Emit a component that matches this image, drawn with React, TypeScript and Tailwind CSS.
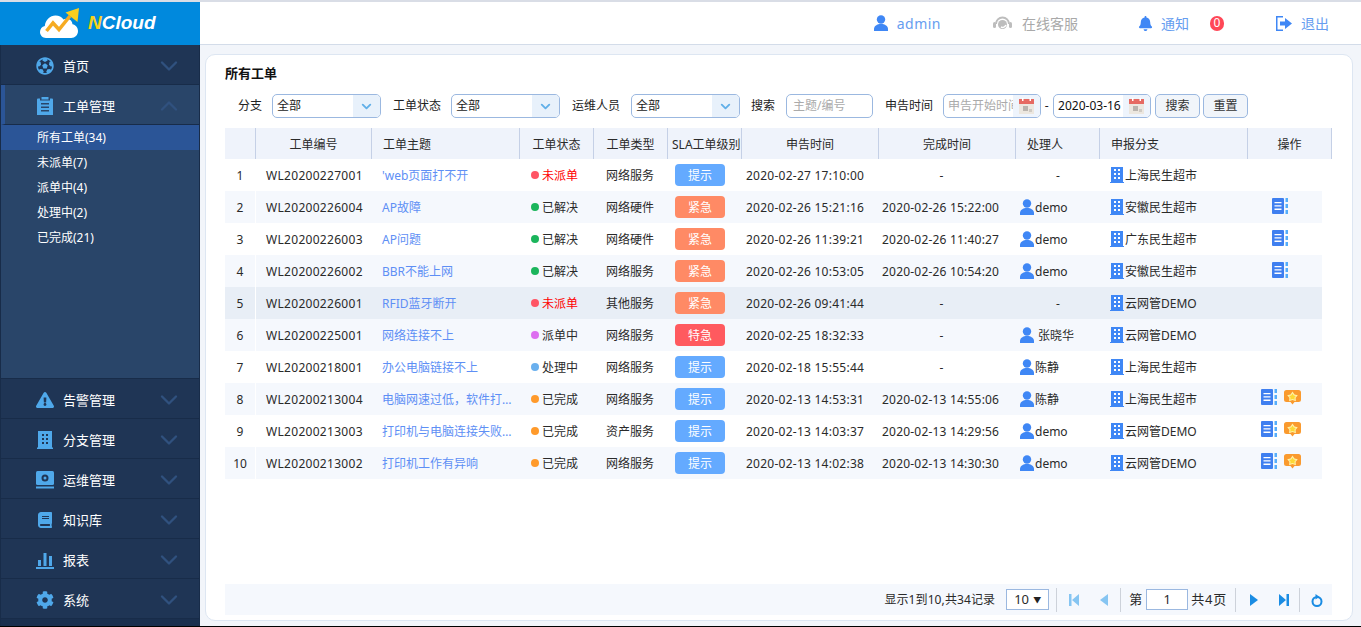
import type { ReactNode } from 'react';
import { ChevronDown, ChevronUp } from 'lucide-react';
import { FaBell, FaBook, FaCog, FaExclamationTriangle, FaFutbol } from 'react-icons/fa';

function Logo() {
  return (
    <svg width="41" height="31" viewBox="0 0 41 31">
      <path d="M6 30c-3.500 0-6-2.800-6-6 0-3 2-5.400 4.800-6C5.500 12 10 7.500 15.500 7.500c3.500 0 6.200 1.500 8 4 1.200-.7 2.500-1 4-.8 2.800.4 4.800 2.700 5 5.500 3 .7 5.500 3.300 5.500 6.800 0 3.800-3 7-6.800 7z" fill="#fff" />
      <path d="M6.500 23l6.500-8 6 6.500L30 8" fill="none" stroke="#f6ab22" strokeWidth="3.500" />
      <path d="M25.500 4.500L39 0l-1.500 14z" fill="#f8cf1f" />
    </svg>
  );
}

function Clipboard() {
  return (
    <svg width="16" height="18" viewBox="0 0 16 18" fill="#4fa8ea">
      <path d="M0 2.500a1 1 0 0 1 1-1h2v2h10v-2h2a1 1 0 0 1 1 1V18H0z" />
      <path d="M4.500 0h7v2.500h-7z" />
      <path d="M4 6h8v1.500H4zM4 9.500h8V11H4zM4 13h8v1.500H4z" fill="#294569" />
    </svg>
  );
}

function BuildingNav() {
  return (
    <svg width="16" height="18" viewBox="0 0 16 18" fill="#4fa8ea">
      <path d="M1 0h14v16.500h1V18H0v-1.500h1z" />
      <path d="M5 3h2v2H5zM9 3h2v2H9zM5 7h2v2H5zM9 7h2v2H9zM5 11h2v2H5zM9 11h2v2H9z" fill="#1f3555" />
    </svg>
  );
}

function OpsNav() {
  return (
    <svg width="18" height="18" viewBox="0 0 18 18" fill="#4fa8ea">
      <rect width="18" height="14" rx="1.500" />
      <rect y="15.500" width="18" height="2" />
      <circle cx="9" cy="7" r="2.500" fill="none" stroke="#1f3555" strokeWidth="2" />
    </svg>
  );
}

function ChartNav() {
  return (
    <svg width="18" height="18" viewBox="0 0 18 18" fill="#4fa8ea">
      <path d="M2 9h3v6H2zM7.500 2h3v13h-3zM13 5h3v10h-3zM0 16h18v2H0z" />
    </svg>
  );
}

const navBelow = [
  { label: '告警管理', icon: <FaExclamationTriangle size={18} color="#4fa8ea" /> },
  { label: '分支管理', icon: <BuildingNav /> },
  { label: '运维管理', icon: <OpsNav /> },
  { label: '知识库', icon: <FaBook size={16} color="#4fa8ea" /> },
  { label: '报表', icon: <ChartNav /> },
  { label: '系统', icon: <FaCog size={18} color="#4fa8ea" /> },
];

const subItems = ['所有工单(34)', '未派单(7)', '派单中(4)', '处理中(2)', '已完成(21)'];

function NavRow({ label, icon }: { label: string; icon: ReactNode }) {
  return (
    <div className="h-10 flex items-center border-b border-[#182c49] bg-[#1f3555] pt-[2px] pl-[35px] pr-[16px] text-white text-[13px]">
      <span className="w-[18px] flex justify-center">{icon}</span>
      <span className="ml-[9px] pt-[2px] flex-1">{label}</span>
      <ChevronDown size={28} color="#30517f" strokeWidth={2} />
    </div>
  );
}

function Sidebar() {
  return (
    <aside className="w-[200px] shrink-0 flex flex-col bg-[#1a2f4e]">
      <div className="h-[43px] bg-[#0089dd] flex items-center pl-10">
        <Logo />
        <span className="ml-[7px] font-['Liberation_Sans',sans-serif] font-bold italic text-[19px] text-white">
          <span className="text-[#f8d21c]">N</span>Cloud
        </span>
      </div>
      <div className="flex-1 flex flex-col border-x border-[#182c49]">
        <NavRow label="首页" icon={<FaFutbol size={18} color="#4fa8ea" />} />
        <div className="h-10 flex items-center border-b border-[#182c49] bg-[#294569] border-l-4 border-l-[#2b5597] pt-[2px] pl-[31px] pr-[16px] text-white text-[13px]">
          <span className="w-[18px] flex justify-center"><Clipboard /></span>
          <span className="ml-[9px] pt-[2px] flex-1">工单管理</span>
          <ChevronUp size={28} color="#30517f" strokeWidth={2} />
        </div>
        <div className="h-[254px] bg-[#294569] border-b border-[#182c49] text-white text-[12px]">
          {subItems.map((s, i) => (
            <div key={s} className={i === 0 ? 'h-[25px] flex items-center pl-9 bg-[#2b5597]' : 'h-[25px] flex items-center pl-9'}>
              {s}
            </div>
          ))}
        </div>
        {navBelow.map(n => <NavRow key={n.label} label={n.label} icon={n.icon} />)}
      </div>
    </aside>
  );
}

function Headset() {
  return (
    <svg width="19" height="16" viewBox="0 0 19 16" fill="none">
      <path d="M3 9a6.500 6.500 0 0 1 13 0" stroke="#bdbdbd" strokeWidth="2" />
      <rect x="0" y="7" width="3" height="6" rx="1.500" fill="#bdbdbd" />
      <rect x="16" y="7" width="3" height="6" rx="1.500" fill="#bdbdbd" />
      <circle cx="9.500" cy="9.500" r="4.500" fill="#bdbdbd" />
      <path d="M8 12c2 1 4 0 5-2" stroke="#fff" strokeWidth="1.500" />
    </svg>
  );
}

function Logout() {
  return (
    <svg width="16" height="15" viewBox="0 0 16 15" fill="#3f87f5">
      <path d="M0 0h7v1.500H1.500v12H7V15H0z" />
      <path d="M4 5.500h5V2l7 5.500L9 13V9.500H4z" />
    </svg>
  );
}

function Header() {
  return (
    <header className="h-[43px] bg-white border-b border-[#d3dce9] flex items-center justify-end pr-8 text-[14px] text-[#669df0]">
      <PersonIcon />
      <span className="ml-[9px] tracking-[0.5px]">admin</span>
      <span className="ml-[52px]"><Headset /></span>
      <span className="ml-[10px] text-[#a9a9a9]">在线客服</span>
      <span className="ml-[60px]"><FaBell size={15} color="#3f87f5" /></span>
      <span className="ml-2">通知</span>
      <span className="ml-[21px] w-[14px] h-[15px] rounded-full bg-[#ff4757] text-white text-[12px] flex items-center justify-center">0</span>
      <span className="ml-[52px]"><Logout /></span>
      <span className="ml-[9px]">退出</span>
    </header>
  );
}

function SelectBox({ className }: { className: string }) {
  return (
    <div className={`w-[109px] h-6 border border-[#9bb8e0] rounded-[5px] flex items-center overflow-hidden bg-white ${className}`}>
      <span className="flex-1 pl-[4px] text-[12px] text-[#222]">全部</span>
      <span className="w-[27px] h-full bg-[#e8f1fb] flex items-center justify-center">
        <ChevronDown size={15} color="#62b0e8" strokeWidth={3} />
      </span>
    </div>
  );
}

function Calendar() {
  return (
    <svg width="15" height="16" viewBox="0 0 15 16">
      <rect y="1" width="15" height="15" fill="#ece7df" />
      <rect y="1" width="15" height="5" fill="#e66a62" />
      <rect x="3" width="1.500" height="3" fill="#fff" />
      <rect x="10.500" width="1.500" height="3" fill="#fff" />
      <rect x="4" y="8" width="5" height="5" fill="#b9b4ae" />
      <rect x="10" y="11" width="3" height="3" fill="#cfcac3" />
    </svg>
  );
}

function DateBox({ value, className }: { value?: string; className: string }) {
  return (
    <div className={`w-[98px] h-6 border border-[#9bb8e0] rounded-[5px] flex items-center overflow-hidden bg-white ${className}`}>
      <span className={value ? 'flex-1 pl-[4px] text-[12px] text-[#111] whitespace-nowrap overflow-hidden' : 'flex-1 pl-[4px] text-[12px] text-[#aaa] whitespace-nowrap overflow-hidden'}>
        {value ?? '申告开始时间'}
      </span>
      <span className="w-[27px] shrink-0 h-full bg-[#eef4fc] flex items-center justify-center">
        <Calendar />
      </span>
    </div>
  );
}

function FilterBar() {
  return (
    <div className="mt-3 ml-[32px] flex items-center h-6 text-[12px] text-[#222]">
      <span>分支</span>
      <SelectBox className="ml-[10px]" />
      <span className="ml-3">工单状态</span>
      <SelectBox className="ml-[10px]" />
      <span className="ml-3">运维人员</span>
      <SelectBox className="ml-[11px]" />
      <span className="ml-[11px]">搜索</span>
      <div className="ml-[11px] w-[87px] h-6 border border-[#9bb8e0] rounded-[5px] flex items-center pl-[6px] text-[#aaa]">主题/编号</div>
      <span className="ml-3">申告时间</span>
      <DateBox className="ml-[10px]" />
      <span className="ml-[2px] mr-[3px] w-[7px] text-center">-</span>
      <DateBox className="" value="2020-03-16" />
      <button className="ml-[4px] w-[45px] h-6 border border-[#9bb8e0] rounded-[5px] bg-[#f1f5fa] text-[#333]">搜索</button>
      <button className="ml-[3px] w-[45px] h-6 border border-[#9bb8e0] rounded-[5px] bg-[#f1f5fa] text-[#333]">重置</button>
    </div>
  );
}

function PersonIcon() {
  return (
    <svg width="14" height="16" viewBox="0 0 14 16" fill="#3f87f5" className="shrink-0">
      <circle cx="7" cy="4.500" r="4.200" />
      <path d="M0 16v-2c0-3 3-5 7-5s7 2 7 5v2z" />
    </svg>
  );
}

function BuildingIcon() {
  return (
    <svg width="14" height="16" viewBox="0 0 14 16" fill="#3f87f5" className="shrink-0">
      <path d="M1 0h12v15h1v1H0v-1h1z" />
      <path d="M4 2h2v2H4zM8 2h2v2H8zM4 6h2v2H4zM8 6h2v2H8zM4 10h2v2H4zM8 10h2v2H8z" fill="#fff" />
    </svg>
  );
}

function DetailIcon() {
  return (
    <svg width="16" height="16" viewBox="0 0 16 16">
      <rect width="12" height="16" rx="1" fill="#3f7ff0" />
      <path d="M2.500 4h7v1.300h-7zM2.500 7.300h7v1.300h-7zM2.500 10.600h7v1.300h-7z" fill="#fff" />
      <path d="M13.500 0H16v4h-2.500zM13.500 6H16v4h-2.500zM13.500 12H16v4h-2.500z" fill="#56aefb" />
    </svg>
  );
}

function RateIcon() {
  return (
    <svg width="17" height="15" viewBox="0 0 17 15">
      <path d="M2.500 0h12A2.500 2.500 0 0 1 17 2.500v7a2.500 2.500 0 0 1-2.500 2.500h-4l-2 2.500-2-2.500h-4A2.500 2.500 0 0 1 0 9.500v-7A2.500 2.500 0 0 1 2.500 0z" fill="#fa9a2e" />
      <path d="M8.500 1.500l2 3 3.300.7-2.200 2.600.3 3.400-3.400-1.200-3.400 1.200.3-3.400-2.200-2.600 3.300-.7z" fill="#fff1a8" />
      <path d="M8.500 3.500l1.300 2 2.100.4-1.400 1.700.2 2.100-2.200-.8-2.200.8.2-2.100-1.400-1.700 2.100-.4z" fill="#fdd835" />
    </svg>
  );
}

type Row = [string, string, string, string, string, string, string, string, string];

const rows: Row[] = [
  ['WL20200227001', "'web页面打不开", '未派单', '网络服务', '提示', '2020-02-27 17:10:00', '-', '-', '上海民生超市'],
  ['WL20200226004', 'AP故障', '已解决', '网络硬件', '紧急', '2020-02-26 15:21:16', '2020-02-26 15:22:00', 'demo', '安徽民生超市'],
  ['WL20200226003', 'AP问题', '已解决', '网络硬件', '紧急', '2020-02-26 11:39:21', '2020-02-26 11:40:27', 'demo', '广东民生超市'],
  ['WL20200226002', 'BBR不能上网', '已解决', '网络服务', '紧急', '2020-02-26 10:53:05', '2020-02-26 10:54:20', 'demo', '安徽民生超市'],
  ['WL20200226001', 'RFID蓝牙断开', '未派单', '其他服务', '紧急', '2020-02-26 09:41:44', '-', '-', '云网管DEMO'],
  ['WL20200225001', '网络连接不上', '派单中', '网络服务', '特急', '2020-02-25 18:32:33', '-', '张晓华', '云网管DEMO'],
  ['WL20200218001', '办公电脑链接不上', '处理中', '网络服务', '提示', '2020-02-18 15:55:44', '-', '陈静', '上海民生超市'],
  ['WL20200213004', '电脑网速过低，软件打开很慢', '已完成', '网络服务', '提示', '2020-02-13 14:53:31', '2020-02-13 14:55:06', '陈静', '上海民生超市'],
  ['WL20200213003', '打印机与电脑连接失败无法打印', '已完成', '资产服务', '提示', '2020-02-13 14:03:37', '2020-02-13 14:29:56', 'demo', '云网管DEMO'],
  ['WL20200213002', '打印机工作有异响', '已完成', '网络服务', '提示', '2020-02-13 14:02:38', '2020-02-13 14:30:30', 'demo', '云网管DEMO'],
];

const dotColor: Record<string, string> = {
  未派单: 'bg-[#ff5565]',
  已解决: 'bg-[#1bb55c]',
  派单中: 'bg-[#dd6ff0]',
  处理中: 'bg-[#6ab0ee]',
  已完成: 'bg-[#ff9a2b]',
};

const pillColor: Record<string, string> = {
  提示: 'bg-[#64aaff]',
  紧急: 'bg-[#ff8a65]',
  特急: 'bg-[#ff5a5f]',
};

const headers = ['', '工单编号', '工单主题', '工单状态', '工单类型', 'SLA工单级别', '申告时间', '完成时间', '处理人', '申报分支', '操作'];

function TicketTable() {
  return (
    <div className="mt-[10px] mx-[19px]">
      <div className="grid grid-cols-[31px_116px_148px_74px_74px_74px_137px_137px_84px_148px_84px] w-[1107px] h-[31px] bg-[#eff3fb] text-[12px] text-[#2a2a2a]">
        {headers.map((h, i) => (
          <div
            key={i}
            className={
              i === 2 || i === 8 || i === 9
                ? 'flex items-center pt-[2px] pl-[11px] border-r border-[#c5d0e6] whitespace-nowrap overflow-hidden'
                : i === 5
                  ? 'flex items-center pt-[2px] pl-[4px] border-r border-[#c5d0e6] whitespace-nowrap overflow-hidden'
                  : 'flex items-center justify-center pt-[2px] border-r border-[#c5d0e6] whitespace-nowrap overflow-hidden'
            }
          >
            {h}
          </div>
        ))}
      </div>
      {rows.map((r, i) => {
        const [no, title, status, type, level, created, done, owner, branch] = r;
        const bg = i === 4 ? 'bg-[#e8eef6]' : i % 2 === 1 ? 'bg-[#f5f8fd]' : 'bg-white';
        return (
          <div key={no} className={`grid grid-cols-[31px_116px_148px_74px_74px_74px_137px_137px_84px_148px_74px] h-8 w-[1097px] items-center text-[12px] text-[#2a2a2a] ${bg}`}>
            <div className="h-full flex items-center justify-center pt-[2px] border-r border-white">{i + 1}</div>
            <div className="pl-[10px] pt-[2px] tracking-[0.3px]">{no}</div>
            <div className="pl-[10px] pr-[4px] pt-[2px] text-[#5e8ff5] truncate">{title}</div>
            <div className={status === '未派单' ? 'flex items-center pl-[11px] text-[#f00]' : 'flex items-center pl-[11px]'}>
              <span className={`w-2 h-2 rounded-full ${dotColor[status]}`} />
              <span className="ml-[3px] pt-[2px]">{status}</span>
            </div>
            <div className="pl-3 pt-[2px]">{type}</div>
            <div className="pl-[7px]">
              <span className={`w-[50px] h-[22px] rounded-[4px] flex items-center justify-center pt-[2px] text-white ${pillColor[level]}`}>{level}</span>
            </div>
            <div className="pl-[4px] pt-[2px] whitespace-nowrap tracking-[0.25px]">{created}</div>
            <div className={done === '-' ? 'text-center pt-[2px] pr-[12px]' : 'pl-[3px] pt-[2px] whitespace-nowrap tracking-[0.2px]'}>{done}</div>
            {owner === '-' ? (
              <div className="text-center pt-[2px]">-</div>
            ) : (
              <div className="flex items-center pl-[4px]">
                <PersonIcon />
                <span className={owner === '张晓华' ? 'ml-[4px] pt-[2px]' : 'ml-[1px] pt-[2px]'}>{owner}</span>
              </div>
            )}
            <div className="flex items-center pl-[10px]">
              <BuildingIcon />
              <span className="ml-[1px] pt-[2px]">{branch}</span>
            </div>
            <div className={i >= 7 ? 'flex items-center justify-center gap-[7px] pr-2 mb-[4px]' : 'flex items-center justify-center pr-[10px] mb-[2px]'}>
              {i >= 1 && i <= 3 && <DetailIcon />}
              {i >= 7 && <DetailIcon />}
              {i >= 7 && <RateIcon />}
            </div>
          </div>
        );
      })}
    </div>
  );
}

function Divider() {
  return <span className="block w-px h-6 bg-[#cdd2da]" />;
}

function Pager() {
  return (
    <div className="mt-auto mb-[5px] mx-[19px] h-[31px] w-[1107px] bg-[#f5f8fd] flex items-center justify-end text-[12px] text-[#2a2a2a]">
      <span className="tracking-[0.1px]">显示1到10,共34记录</span>
      <div className="ml-[11px] w-[43px] h-[21px] border border-[#9bb8e0] bg-white flex items-center justify-between px-[7px] text-[13px]">
        <span>10</span>
        <span className="text-[8px] text-[#222]">▼</span>
      </div>
      <span className="ml-[7px]"><Divider /></span>
      <svg className="ml-3" width="10" height="12" viewBox="0 0 10 12" fill="#86c5f2"><path d="M0 0h2.500v12H0zM10 0v12L3 6z" /></svg>
      <svg className="ml-[21px]" width="8" height="12" viewBox="0 0 8 12" fill="#86c5f2"><path d="M8 0v12L0 6z" /></svg>
      <span className="ml-3"><Divider /></span>
      <span className="ml-2 text-[13px]">第</span>
      <div className="ml-[4px] w-[42px] h-[21px] border border-[#9bb8e0] bg-white flex items-center justify-center text-[13px]">1</div>
      <span className="ml-[3px] text-[13px] tracking-[0.8px]">共4页</span>
      <span className="ml-2"><Divider /></span>
      <svg className="ml-[14px]" width="8" height="12" viewBox="0 0 8 12" fill="#1a8ce3"><path d="M0 0v12l8-6z" /></svg>
      <svg className="ml-[21px]" width="10" height="12" viewBox="0 0 10 12" fill="#1a8ce3"><path d="M0 0v12l7-6zM7.500 0H10v12H7.500z" /></svg>
      <span className="ml-[10px]"><Divider /></span>
      <svg className="ml-[11px] mr-[9px]" width="12" height="14" viewBox="0 0 12 14" fill="none">
        <circle cx="6" cy="8.500" r="4.500" stroke="#1a8ce3" strokeWidth="2" />
        <path d="M4.500 1v5.500l4-2.700z" fill="#1a8ce3" />
      </svg>
    </div>
  );
}

export default function App() {
  return (
    <div className="h-[627px] w-[1361px] overflow-hidden flex flex-col bg-[#f2f5fa] font-['Noto_Sans','Noto_Sans_CJK_SC',sans-serif]">
      <div className="h-[2px] bg-[#d9dde6]" />
      <div className="flex-1 flex min-h-0">
        <Sidebar />
        <main className="flex-1 flex flex-col min-w-0">
          <Header />
          <div className="flex-1 mt-[9px] ml-[5px] mr-2 mb-[5px] bg-white border border-[#dde6f2] rounded-[10px] flex flex-col">
            <h1 className="mt-[9px] ml-[19px] text-[13px] font-bold leading-[18px] text-[#111]">所有工单</h1>
            <FilterBar />
            <TicketTable />
            <Pager />
          </div>
        </main>
      </div>
      <div className="h-px bg-black" />
    </div>
  );
}
